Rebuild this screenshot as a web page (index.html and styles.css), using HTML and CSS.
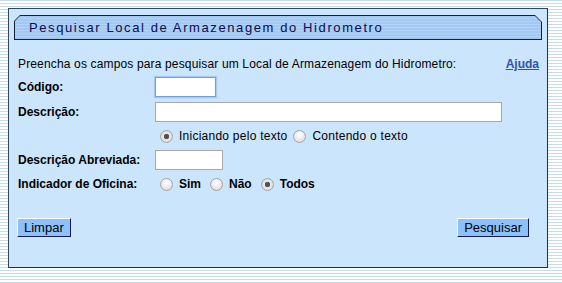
FILE: index.html
```html
<!DOCTYPE html>
<html>
<head>
<meta charset="utf-8">
<title>Pesquisar Local de Armazenagem do Hidrometro</title>
<link rel="stylesheet" href="styles.css">
</head>
<body>
<div class="panel">
  <div class="titlebar">
    <div class="titlefill">Pesquisar Local de Armazenagem do Hidrometro</div>
  </div>
  <form class="form">
    <div class="intro">
      <span>Preencha os campos para pesquisar um Local de Armazenagem do Hidrometro:</span>
      <a href="#" class="help">Ajuda</a>
    </div>

    <label class="lbl">Código:</label>
    <div class="field"><input type="text" class="txt txt-code focused"></div>

    <label class="lbl">Descrição:</label>
    <div class="field"><input type="text" class="txt txt-desc"></div>

    <span></span>
    <div class="field radios">
      <input type="radio" name="tipo" class="rd" checked><span class="opt">Iniciando pelo texto</span>
      <input type="radio" name="tipo" class="rd"><span class="opt">Contendo o texto</span>
    </div>

    <label class="lbl">Descrição Abreviada:</label>
    <div class="field"><input type="text" class="txt txt-short"></div>

    <label class="lbl">Indicador de Oficina:</label>
    <div class="field radios">
      <input type="radio" name="ofic" class="rd"><span class="opt bold">Sim</span>
      <input type="radio" name="ofic" class="rd"><span class="opt bold">Não</span>
      <input type="radio" name="ofic" class="rd" checked><span class="opt bold">Todos</span>
    </div>

    <div class="buttons">
      <button type="button" class="btn">Limpar</button>
      <button type="button" class="btn">Pesquisar</button>
    </div>
  </form>
</div>
</body>
</html>
```

FILE: styles.css
```css
html, body {
  margin: 0;
  padding: 0;
}
body {
  width: 562px;
  height: 283px;
  overflow: hidden;
  padding-top: 8px;
  box-sizing: border-box;
  font-family: "Liberation Sans", Arial, sans-serif;
  font-size: 12px;
  color: #000;
  background: repeating-linear-gradient(to bottom, #c4dcec 0, #c4dcec 1px, #ffffff 1px, #ffffff 3px);
}
.panel {
  margin-left: 8px;
  width: 540px;
  height: 260px;
  box-sizing: border-box;
  background: #cbe5fd;
  border: 1px solid #2f4760;
  border-right-color: #1f3348;
  border-bottom-color: #1f3348;
  padding: 6px 5px 0 5px;
}
.titlebar {
  width: 528px;
  height: 25px;
  box-sizing: border-box;
  padding: 1px;
  background: #14202e;
  clip-path: polygon(6px 0, calc(100% - 7px) 0, 100% 7px, 100% 100%, 0 100%, 0 6px);
}
.titlefill {
  height: 100%;
  box-sizing: border-box;
  padding-left: 14px;
  line-height: 23px;
  font-size: 13px;
  letter-spacing: 1.6px;
  color: #0a0a50;
  background: repeating-linear-gradient(to bottom, #a3c9f3 0, #a3c9f3 2px, #b2d3f7 2px, #b2d3f7 3px);
  clip-path: polygon(5px 0, calc(100% - 6px) 0, 100% 6px, 100% 100%, 0 100%, 0 5px);
}
.form {
  margin: 16px 0 0 4px;
  padding-right: 3px;
  display: grid;
  grid-template-columns: 137px auto;
  row-gap: 5px;
  align-items: center;
}
.intro {
  grid-column: 1 / 3;
  display: flex;
  justify-content: space-between;
  line-height: 16px;
}
.intro span {
  letter-spacing: 0.15px;
}
.help {
  color: #3050b4;
  font-weight: bold;
  text-decoration: underline;
}
.lbl {
  font-weight: bold;
}
.field {
  display: flex;
  align-items: center;
}
.txt {
  height: 20px;
  box-sizing: border-box;
  margin: 0;
  border: 1px solid #a8a8a8;
  background: #fff;
  padding: 1px 3px;
  font: 12px "Liberation Sans", Arial, sans-serif;
  outline: none;
}
.txt-code { width: 61px; }
.txt-desc { width: 347px; }
.txt-short { width: 68px; }
.focused {
  border-color: #6d9ee6;
  box-shadow: 0 0 1px 1px #a9c8f2;
}
.radios {
  height: 18px;
}
.radios:nth-of-type(1) {
  margin-top: 1px;
}
.rd {
  appearance: none;
  -webkit-appearance: none;
  width: 13px;
  height: 13px;
  margin: 0 6px 0 5px;
  border: 1px solid #a4a4a4;
  border-radius: 50%;
  box-sizing: border-box;
  background: radial-gradient(circle at 50% 35%, #ffffff 0, #f0f0f0 40%, #d4d4d4 100%);
}
.rd:checked {
  background: radial-gradient(circle, #4a4a4a 0, #5a5a5a 2.5px, #e8e8e8 3px, #d6d6d6 100%);
}
.opt {
  letter-spacing: 0.25px;
}
.opt + .rd {
  margin-left: 6px;
}
.bold {
  font-weight: bold;
  letter-spacing: 0;
  margin-right: 3px;
}
.buttons {
  grid-column: 1 / 3;
  display: flex;
  justify-content: space-between;
  margin-top: 20px;
  padding-right: 10px;
}
.btn {
  height: 19px;
  margin: 0;
  padding: 0 6px;
  font: 13px "Liberation Sans", Arial, sans-serif;
  color: #000;
  background: #8ec0fb;
  border: 1px solid;
  border-color: #ffffff #101c4a #101c4a #ffffff;
  line-height: 17px;
}
.btn:first-child {
  margin-left: -1px;
}
```
